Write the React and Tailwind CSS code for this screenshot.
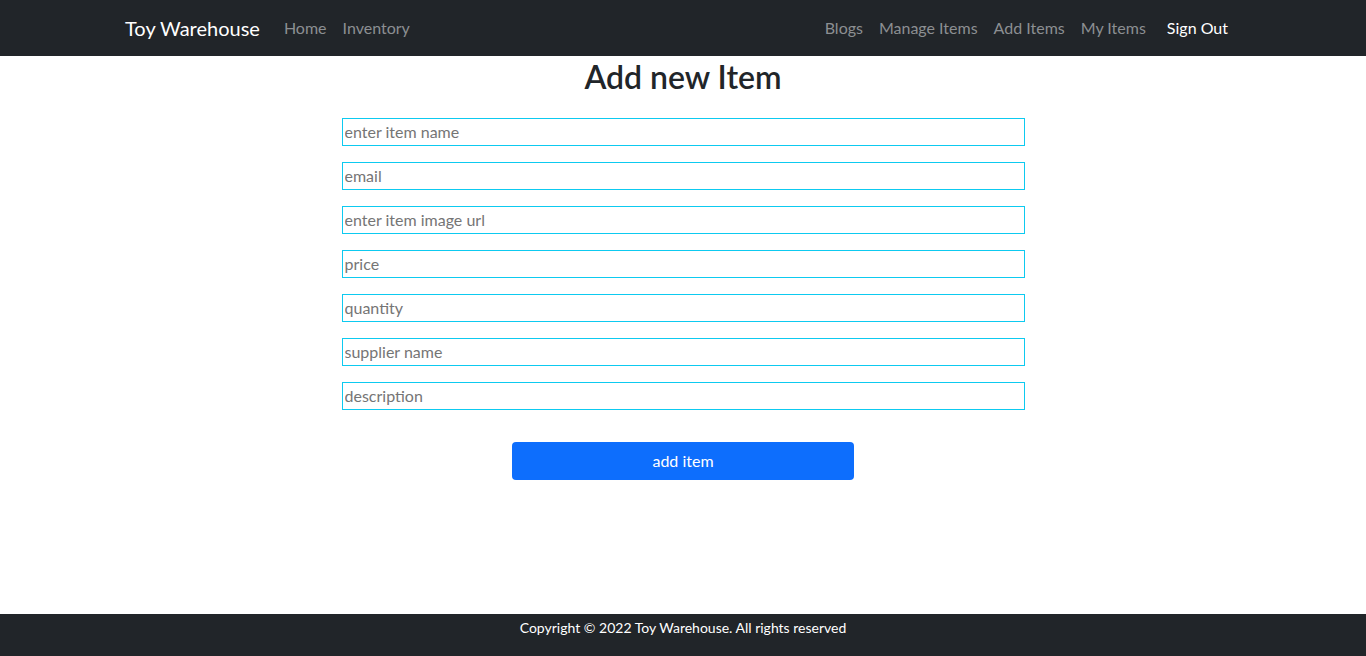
import React from "react";

const fields = [
  "enter item name",
  "email",
  "enter item image url",
  "price",
  "quantity",
  "supplier name",
  "description",
];

export default function App() {
  return (
    <div
      className="min-h-screen flex flex-col bg-white text-[#212529]"
      style={{ fontFamily: 'Lato, "Noto Sans", sans-serif' }}
    >
      <nav className="h-[56px] bg-[#212529] flex items-center shrink-0">
        <div className="w-[1116px] mx-auto flex items-center justify-between">
          <div className="flex items-center">
            <a className="text-[20px] text-white mr-4 leading-[30px]">Toy Warehouse</a>
            <a className="px-2 text-[16px] text-[#8c8f92] leading-6">Home</a>
            <a className="px-2 text-[16px] text-[#8c8f92] leading-6">Inventory</a>
          </div>
          <div className="flex items-center mr-[13px]">
            <a className="px-2 text-[16px] text-[#8c8f92] leading-6">Blogs</a>
            <a className="px-2 text-[16px] text-[#8c8f92] leading-6">Manage Items</a>
            <a className="px-2 text-[16px] text-[#8c8f92] leading-6">Add Items</a>
            <a className="pl-2 text-[16px] text-[#8c8f92] leading-6">My Items</a>
            <a className="ml-[21px] text-[16px] text-white leading-6">Sign Out</a>
          </div>
        </div>
      </nav>

      <main className="flex-1 flex flex-col items-center">
        <h2 className="text-[32px] font-semibold leading-[38px] mt-[2px] text-center">Add new Item</h2>
        <form className="w-[683px] mt-[22px] flex flex-col gap-4">
          {fields.map((f) => (
            <input
              key={f}
              type="text"
              placeholder={f}
              className="h-[28px] w-full border border-[#0dcaf0] px-[2px] pb-[1px] text-[16px] placeholder:text-[#757575] outline-none"
            />
          ))}
          <button
            type="button"
            className="mt-4 self-center w-[342px] h-[38px] bg-[#0d6efd] text-white text-[16px] rounded-[4px]"
          >
            add item
          </button>
        </form>
      </main>

      <footer className="h-[42px] bg-[#212529] shrink-0 flex justify-center pt-[3px]">
        <p className="text-[14px] text-white leading-[21px]">
          Copyright © 2022 Toy Warehouse. All rights reserved
        </p>
      </footer>
    </div>
  );
}
